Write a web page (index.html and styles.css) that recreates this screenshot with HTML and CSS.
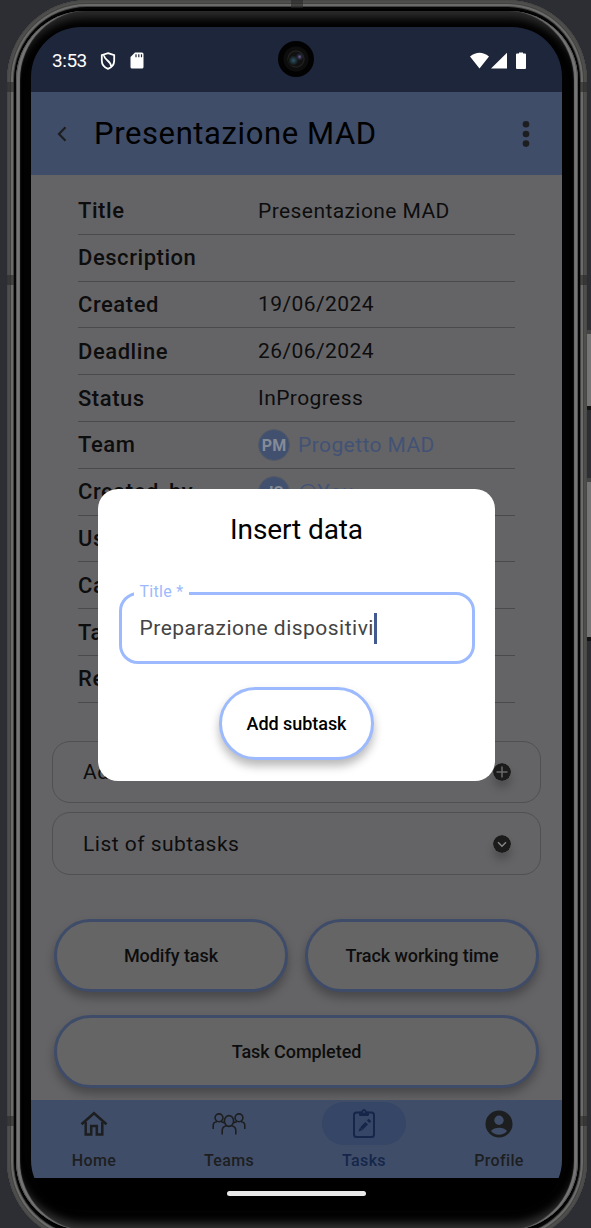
FILE: index.html
```
<!DOCTYPE html>
<html lang="it">
<head>
<meta charset="utf-8">
<title>Presentazione MAD</title>
<link rel="stylesheet" href="styles.css">
</head>
<body>
<div class="side-key power"></div>
<div class="side-key volume"></div>
<div class="phone">
  <div class="band top-left"></div><div class="band top-right"></div>
  <div class="band low-left"></div><div class="band low-right"></div>
  <div class="band bot-left"></div><div class="band bot-right"></div>
  <div class="band top-mid"></div>
  <div class="bezel">
  <div class="screen">
    <div class="status">
      <span class="clock">3:53</span>
      <svg class="shield" width="16" height="18" viewBox="0 0 16 18" fill="none" stroke="#fff" stroke-width="1.8"><path d="M8 1.2 14.200 3.200V8.500C14.200 12.500 11.500 15.500 8 16.800 4.500 15.500 1.800 12.500 1.800 8.500V3.200ZM4 3.500C4.500 8.500 10.500 8 11.200 14.500"/></svg>
      <svg class="card" width="14" height="17" viewBox="0 0 14 17"><path d="M5 .5H12Q13.500.5 13.500 2V15Q13.500 16.500 12 16.500H2Q.5 16.500.5 15V5Z" fill="#fff"/><path d="M6 2.200V5.200M8.800 2.200V5.200M11.500 2.200V5.200" stroke="#1e263b" stroke-width="1.200"/></svg>
      <svg class="signals" width="57" height="18" viewBox="0 0 57 18" fill="#fff"><path d="M0 4.500Q9.500-3 19 4.500L9.500 16.500ZM21 16.500 37 .7V16.500ZM46 2.500Q46 1.500 47 1.500H49V.5H53V1.500H55Q56 1.500 56 2.500V16Q56 17 55 17H47Q46 17 46 16Z"/></svg>
    </div>
    <header class="header">
      <svg width="12" height="18" viewBox="0 0 12 18" fill="none" stroke="#1d1e20" stroke-width="2.200"><path d="M10.500 2.300 4 9 10.500 15.700"/></svg>
      <h1>Presentazione MAD</h1>
      <svg class="more" width="8" height="28" viewBox="0 0 8 28" fill="#1d1e20"><circle cx="4" cy="4.200" r="3.300"/><circle cx="4" cy="14" r="3.300"/><circle cx="4" cy="23.600" r="3.300"/></svg>
    </header>
    <main class="content">
      <div class="details">
        <div class="row"><b>Title</b><span>Presentazione MAD</span></div>
        <div class="row"><b>Description</b><span></span></div>
        <div class="row"><b>Created</b><span>19/06/2024</span></div>
        <div class="row"><b>Deadline</b><span>26/06/2024</span></div>
        <div class="row"><b>Status</b><span>InProgress</span></div>
        <div class="row"><b>Team</b><span class="link"><i>PM</i>Progetto MAD</span></div>
        <div class="row"><b>Created by</b><span class="link"><i>JS</i>@You</span></div>
        <div class="row"><b>Users</b><span></span></div>
        <div class="row"><b>Cat.</b><span></span></div>
        <div class="row"><b>Tags</b><span></span></div>
        <div class="row"><b>Repeat</b><span></span></div>
      </div>
      <div class="panels">
        <div class="panel">Add subtask<svg class="dot" width="18" height="18" viewBox="0 0 18 18"><circle cx="9" cy="9" r="9" fill="#1b1b1b"/><path d="M9 3.500V14.500M3.500 9H14.500" stroke="#6a6a6b" stroke-width="1.500"/></svg></div>
        <div class="panel">List of subtasks<svg class="dot" width="18" height="18" viewBox="0 0 18 18"><circle cx="9" cy="9" r="9" fill="#1b1b1b"/><path d="M5 7.300 9 11.200 13 7.300" fill="none" stroke="#858586" stroke-width="1.500"/></svg></div>
      </div>
      <div class="actions">
        <div class="button">Modify task</div>
        <div class="button">Track working time</div>
        <div class="button wide">Task Completed</div>
      </div>
    </main>
    <nav class="nav">
      <div class="tab"><div class="pill"><svg width="28" height="26" viewBox="0 0 28 26" fill="none" stroke="#1d1e20" stroke-width="2.500"><path d="M1.500 13.200 14 2.200 26.500 13.200M5.700 11V23.500H11.200V15H16.800V23.500H22.300V11" /></svg></div>Home</div>
      <div class="tab"><div class="pill"><svg width="34" height="24" viewBox="0 0 34 24" fill="none" stroke="#1d1e20" stroke-width="1.600"><circle cx="7" cy="5.800" r="3.900"/><circle cx="27" cy="5.800" r="3.900"/><ellipse cx="17" cy="9" rx="4.600" ry="5.400"/><path d="M1.200 17V13.500Q1.200 10 5 9.700M9 9.700Q11.500 10 12.300 11M32.800 17V13.500Q32.800 10 29 9.700M25 9.700Q22.500 10 21.700 11M10.200 22.500V18.500Q10.200 14.500 14.500 13.700M23.800 22.500V18.500Q23.800 14.500 19.500 13.700"/></svg></div>Teams</div>
      <div class="tab active"><div class="pill"><svg width="24" height="30" viewBox="0 0 24 30" fill="none" stroke="#15264a" stroke-width="2"><rect x="2" y="3.500" width="20" height="24.500" rx="2.500"/><path d="M7 2.700H9.200Q10 0 12 0T14.800 2.700H17V5.500Q17 7 15.500 7H8.500Q7 7 7 5.500Z" fill="#15264a" stroke="none"/><circle cx="12" cy="3" r=".9" fill="#354666" stroke="none"/><path d="M9.500 19.500 14.700 14.300" stroke-width="3.600"/><path d="M16.200 12.800 18 11" stroke-width="3.600"/><path d="M6.500 22.500 8 18.500 10.500 21Z" fill="#15264a" stroke="none"/></svg></div>Tasks</div>
      <div class="tab"><div class="pill"><svg width="28" height="28" viewBox="0 0 28 28"><circle cx="14" cy="14" r="13.500" fill="#1d1e20"/><circle cx="14" cy="10.300" r="4.700" fill="#3f4d68"/><path d="M6 21Q9 17.700 14 17.700T22 21Q19 24.800 14 24.800T6 21Z" fill="#3f4d68"/></svg></div>Profile</div>
    </nav>
    <div class="gesture"><div class="handle"></div></div>
  </div>
  </div>
  <div class="camera"></div>
  <div class="dialog">
    <h2>Insert data</h2>
    <div class="field"><span class="legend">Title *</span><span class="value">Preparazione dispositivi</span><span class="caret"></span></div>
    <div class="button light">Add subtask</div>
  </div>
</div>
</body>
</html>
```

FILE: styles.css
```
* { box-sizing: border-box; }
html { background: #2d2e33; }
body { margin: 0; width: 591px; height: 1228px; overflow: hidden; position: relative; background: #2d2e33; font-family: Roboto, "Liberation Sans", sans-serif; color: #0d0d0e; }
svg { display: block; flex: none; }
/* device hardware */
.side-key { position: absolute; left: 586px; width: 8px; background: #757575; border: 1px solid #333; border-top: 4px solid #444; border-bottom: 4px solid #111; border-radius: 2px; }
.power { top: 330px; height: 80px; }
.volume { top: 478px; height: 163px; }
.phone {
  position: relative; margin-left: 7px; width: 580px; height: 1242px; border-radius: 80px; background: #000;
  box-shadow: inset 0 0 0 1px #484847, inset 0 0 0 3px #4e4e4d, inset 0 0 0 4px #424242, inset 0 0 0 6px #6b6b6a, inset 0 0 0 7px #424242, inset 0 0 0 9px #050505;
}
.bezel { position: absolute; left: 9px; top: 11px; right: 9px; bottom: 12px; border-radius: 69px; background: #020202; padding: 16px 15px 20px; box-shadow: inset 1px 0 0 #555, inset -1px 0 0 #555, inset 5px 0 1px -1px #767676, inset -5px 0 1px -1px #767676, inset 0 9px 8px -2px #2b2b2b, inset 0 -9px 8px -2px #333; }
.band { position: absolute; width: 7px; height: 10px; background: rgba(40,40,40,.6); }
.top-left { left: 0; top: 82px; } .top-right { right: 0; top: 82px; }
.low-left { left: 0; top: 275px; } .low-right { right: 0; top: 275px; }
.bot-left { left: 0; top: 1116px; } .bot-right { right: 0; top: 1116px; }
.top-mid { left: 284px; top: 0; width: 12px; height: 8px; }
.screen { width: 531px; height: 1183px; border-radius: 50px; overflow: hidden; background: #000; display: flex; flex-direction: column; }
.camera { position: absolute; left: 271px; top: 41px; width: 36px; height: 36px; border-radius: 50%; background: radial-gradient(circle at 60% 44%, #8a5a96 0, #222b3c 2px, transparent 4px), radial-gradient(circle at 43% 54%, #2b5564 0, #111 5px, transparent 6px), radial-gradient(circle, #111 0 7px, #242424 8px, #0d0d0d 9px 12px, #020202 13px); }
.status { height: 65px; flex: none; background: #1e263b; display: flex; align-items: center; padding: 2px 35px 0 21px; color: #fff; font-size: 19px; }
.clock { width: 48px; letter-spacing: -.45px; }
.shield { margin-right: 14px; }
.signals { margin-left: auto; }
.header { height: 83px; flex: none; background: #3f4d68; display: flex; align-items: center; padding: 0 32px 0 24px; color: #000; }
h1 { margin: 0 auto 0 27px; font-size: 31px; font-weight: 400; letter-spacing: .6px; white-space: nowrap; }
/* task page, dimmed behind the dialog */
.content { height: 925px; flex: none; background: #646467; padding: 13px 21px 0; }
.details { margin: 0 26px; }
.row { height: 46.8px; display: grid; grid-template-columns: 180px 1fr; align-items: center; border-bottom: 1px solid #4a4a4c; font-size: 21px; letter-spacing: .42px; }
.row b { font-size: 22px; font-weight: 500; letter-spacing: .55px; word-spacing: 4px; }
.row span { display: flex; align-items: center; white-space: nowrap; }
.row .link { color: #425275; }
.link i { width: 32px; height: 32px; flex: none; border: 1px solid #555a65; border-radius: 50%; background: #41506f; color: #858b96; font: 700 16px/31px Roboto, sans-serif; letter-spacing: 0; text-align: center; margin-right: 8px; }
.panels { display: grid; gap: 9px; margin-top: 38px; }
.panel { height: 62.500px; display: flex; align-items: center; justify-content: space-between; border: 1px solid #505052; border-radius: 18px; padding: 0 29px 0 30px; font-size: 21px; letter-spacing: .48px; }
.dot { border-radius: 50%; box-shadow: 0 7px 9px rgba(0,0,0,.22); }
.actions { display: grid; grid-template-columns: 234px 234px; gap: 23px 17px; margin: 44px 2px 0; }
.button { height: 73px; display: flex; align-items: center; justify-content: center; border: 3px solid #3e4c69; border-radius: 37px; background: #656565; font-size: 18px; font-weight: 500; letter-spacing: -.05px; box-shadow: 0 6px 10px rgba(0,0,0,.28); }
.wide { grid-column: 1 / 3; }
.nav { height: 78px; flex: none; background: #3f4d68; display: grid; grid-template-columns: 84px 84px 84px 84px; justify-content: space-between; padding: 2px 21px 0; z-index: 1; }
.tab { display: flex; flex-direction: column; align-items: center; gap: 6px; font-size: 16px; line-height: 20px; font-weight: 500; letter-spacing: .35px; color: #1d1e20; }
.pill { width: 84px; height: 43px; border-radius: 22px; display: flex; align-items: center; justify-content: center; }
.active { color: #15264a; }
.active .pill { background: #354666; }
.gesture { flex: 1; background: #000; display: flex; justify-content: center; padding-top: 13px; }
.handle { width: 139px; height: 5px; border-radius: 3px; background: #e8e8e8; }
/* modal */
.dialog { position: absolute; left: 91px; top: 489px; width: 397px; height: 292px; border-radius: 20px; background: #fff; padding: 22px 21px; display: flex; flex-direction: column; align-items: center; color: #000; }
h2 { margin: 0; font-size: 28px; line-height: 38px; font-weight: 400; letter-spacing: -.1px; }
.field { position: relative; width: 356px; height: 72px; margin-top: 43px; border: 3px solid #9cbafd; border-radius: 19px; display: flex; align-items: center; padding-left: 18px; font-size: 21px; letter-spacing: .48px; color: #444; flex: none; }
.legend { position: absolute; left: 12px; top: -13px; background: #fff; padding: 0 5px 0 6px; font-size: 16px; line-height: 20px; letter-spacing: .3px; color: #9cbafd; }
.caret { width: 3px; height: 31px; background: #44598f; }
.light { width: 155px; margin-top: 23px; flex: none; background: #fff; border-color: #9cbafd; }
```
